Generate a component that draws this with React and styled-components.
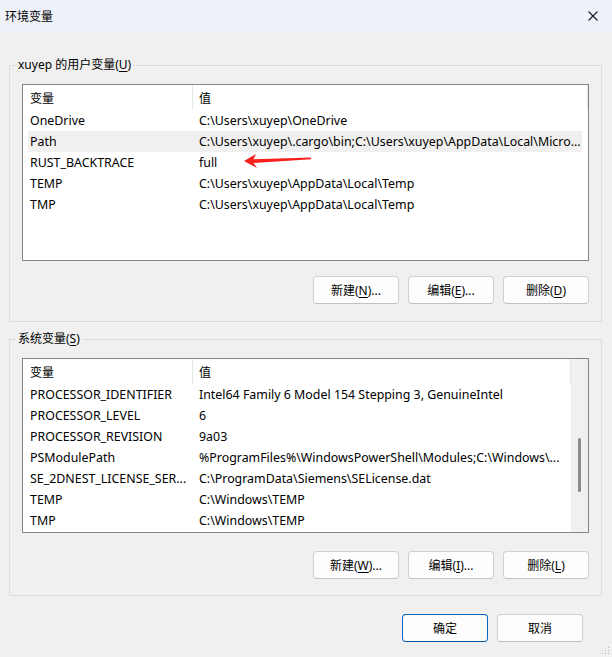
import styled, { createGlobalStyle } from "styled-components";

const userVars = [
    { name: "OneDrive", value: "C:\\Users\\xuyep\\OneDrive" },
    { name: "Path", value: "C:\\Users\\xuyep\\.cargo\\bin;C:\\Users\\xuyep\\AppData\\Local\\Micro...", selected: true },
    { name: "RUST_BACKTRACE", value: "full" },
    { name: "TEMP", value: "C:\\Users\\xuyep\\AppData\\Local\\Temp" },
    { name: "TMP", value: "C:\\Users\\xuyep\\AppData\\Local\\Temp" },
]

const systemVars = [
    { name: "PROCESSOR_IDENTIFIER", value: "Intel64 Family 6 Model 154 Stepping 3, GenuineIntel" },
    { name: "PROCESSOR_LEVEL", value: "6" },
    { name: "PROCESSOR_REVISION", value: "9a03" },
    { name: "PSModulePath", value: "%ProgramFiles%\\WindowsPowerShell\\Modules;C:\\Windows\\..." },
    { name: "SE_2DNEST_LICENSE_SER...", value: "C:\\ProgramData\\Siemens\\SELicense.dat" },
    { name: "TEMP", value: "C:\\Windows\\TEMP" },
    { name: "TMP", value: "C:\\Windows\\TEMP" },
]

function VarTable({ rows }) {
    return (
        <TableBody>
            <Header>
                <HeaderCell $width={170}>变量</HeaderCell>
                <HeaderCell $grow>值</HeaderCell>
            </Header>
            {rows.map((r) => (
                <Row key={r.name} $selected={r.selected}>
                    <NameCell>{r.name}</NameCell>
                    <ValueCell>{r.value}</ValueCell>
                </Row>
            ))}
        </TableBody>
    )
}

export default function App() {
    return (
        <Window>
            <GlobalStyle />
            <TitleBar>
                <span>环境变量</span>
                <svg width="10" height="10" viewBox="0 0 10 10">
                    <path d="M0.5 0.5 L9.5 9.5 M9.5 0.5 L0.5 9.5" stroke="#1b1b1b" strokeWidth="1.1" />
                </svg>
            </TitleBar>
            <Body>
                <Group $top={26} $bottom={17}>
                    <Legend>xuyep 的用户变量(<u>U</u>)</Legend>
                    <List $height={177}>
                        <VarTable rows={userVars} />
                        <Arrow width="74" height="20" viewBox="0 0 74 20">
                            <polygon points="4,11 16,4 13.5,9.3 71,7.4 71,9.2 13.5,13 17,18" fill="#f5201c" />
                        </Arrow>
                    </List>
                    <ButtonRow $top={15}>
                        <Button>新建(<u>N</u>)...</Button>
                        <Button>编辑(<u>E</u>)...</Button>
                        <Button>删除(<u>D</u>)</Button>
                    </ButtonRow>
                </Group>
                <Group $top={9} $bottom={16}>
                    <Legend>系统变量(<u>S</u>)</Legend>
                    <List $height={175}>
                        <VarTable rows={systemVars} />
                        <ScrollTrack>
                            <Thumb />
                        </ScrollTrack>
                    </List>
                    <ButtonRow $top={18}>
                        <Button>新建(<u>W</u>)...</Button>
                        <Button>编辑(<u>I</u>)...</Button>
                        <Button>删除(<u>L</u>)</Button>
                    </ButtonRow>
                </Group>
                <Footer>
                    <Button $primary>确定</Button>
                    <Button>取消</Button>
                </Footer>
            </Body>
            <Grip width="9" height="9" viewBox="0 0 9 9">
                <rect x="7" y="1" width="1" height="1" fill="#b5b5b5" />
                <rect x="4" y="4" width="1" height="1" fill="#b5b5b5" />
                <rect x="7" y="4" width="1" height="1" fill="#b5b5b5" />
                <rect x="1" y="7" width="1" height="1" fill="#b5b5b5" />
                <rect x="4" y="7" width="1" height="1" fill="#b5b5b5" />
                <rect x="7" y="7" width="1" height="1" fill="#b5b5b5" />
            </Grip>
        </Window>
    )
}

const GlobalStyle = createGlobalStyle`
    body {
        margin: 0;
        background: #f0f0f0;
        font-family: "Noto Sans", "Noto Sans CJK SC", sans-serif;
        font-size: 12px;
        color: #000000;
    }
    u {
        text-underline-offset: 2px;
    }
`
const Window = styled.div`
    position: relative;
    width: 612px;
    height: 657px;
    display: flex;
    flex-direction: column;
    overflow: hidden;
    background: #f0f0f0;
`
const TitleBar = styled.div`
    height: 31px;
    box-sizing: border-box;
    flex-shrink: 0;
    display: flex;
    align-items: center;
    justify-content: space-between;
    padding: 0 14px 0 5px;
    background: #eef2f8;
    font-size: 12px;
`
const Body = styled.div`
    display: flex;
    flex-direction: column;
    padding: 0 10px 0 9px;
`
const Group = styled.fieldset`
    margin: ${props => props.$top}px 0 0;
    padding: 11px 12px ${props => props.$bottom}px;
    border: 1px solid #dcdcdc;
    min-width: 0;
`
const Legend = styled.legend`
    padding: 0 2px;
    margin-left: -6px;
    line-height: 16px;
    font-size: 12px;
`
const List = styled.div`
    position: relative;
    height: ${props => props.$height}px;
    box-sizing: border-box;
    border: 1px solid #868686;
    background: #ffffff;
    display: flex;
    overflow: hidden;
`
const TableBody = styled.div`
    flex: 1;
    min-width: 0;
    display: flex;
    flex-direction: column;
`
const Header = styled.div`
    height: 25px;
    display: flex;
    flex-shrink: 0;
`
const HeaderCell = styled.div`
    box-sizing: border-box;
    width: ${props => props.$width ? props.$width + "px" : "auto"};
    flex: ${props => props.$grow ? 1 : "none"};
    display: flex;
    align-items: center;
    padding-left: ${props => props.$grow ? 6 : 7}px;
    border-right: 1px solid #e5e5e5;
`
const Row = styled.div`
    height: 21px;
    margin: 0 6px 0 5px;
    display: flex;
    align-items: center;
    flex-shrink: 0;
    background: ${props => props.$selected ? "#f0f0f0" : "transparent"};
    white-space: nowrap;
    font-size: 12.4px;
`
const NameCell = styled.div`
    box-sizing: border-box;
    width: 169px;
    padding-left: 2px;
    flex-shrink: 0;
    overflow: hidden;
`
const ValueCell = styled.div`
    flex: 1;
    min-width: 0;
    padding-left: 2px;
    overflow: hidden;
`
const Arrow = styled.svg`
    position: absolute;
    left: 217px;
    top: 65px;
`
const ScrollTrack = styled.div`
    width: 17px;
    flex-shrink: 0;
    background: #f0f0f0;
    display: flex;
    justify-content: center;
    padding-top: 79px;
    box-sizing: border-box;
`
const Thumb = styled.div`
    width: 3px;
    height: 54px;
    border-radius: 2px;
    background: #8a8a8a;
`
const ButtonRow = styled.div`
    display: flex;
    justify-content: flex-end;
    gap: 9px;
    margin-top: ${props => props.$top}px;
`
const Button = styled.button`
    width: 86px;
    height: 28px;
    box-sizing: border-box;
    padding: 0;
    border: 1px solid ${props => props.$primary ? "#0067c0" : "#d0d0d0"};
    border-bottom-color: ${props => props.$primary ? "#0055a8" : "#c2c2c2"};
    border-radius: 4px;
    background: #fdfdfd;
    font-family: "Noto Sans", "Noto Sans CJK SC", sans-serif;
    font-size: 12px;
    color: #000000;
`
const Footer = styled.div`
    display: flex;
    justify-content: flex-end;
    gap: 9px;
    margin: 18px 19px 0 0;
`
const Grip = styled.svg`
    position: absolute;
    right: 2px;
    bottom: 2px;
`
